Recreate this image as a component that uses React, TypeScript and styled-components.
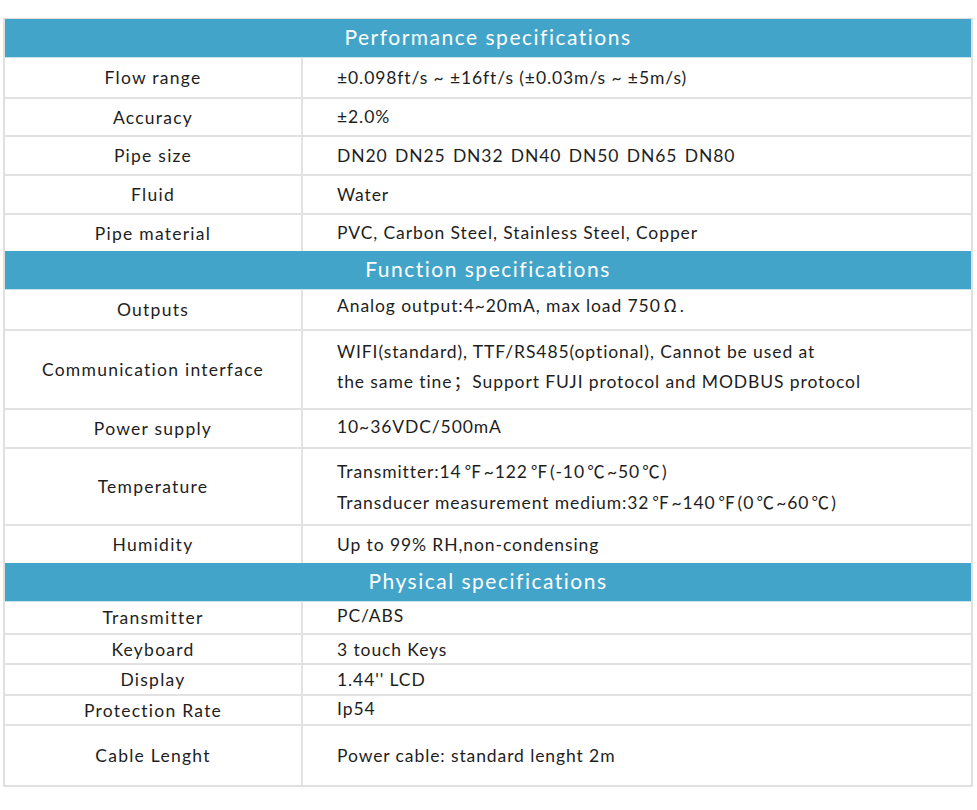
import React from "react";
import styled, { createGlobalStyle } from "styled-components";

const Global = createGlobalStyle`
  html, body { margin: 0; padding: 0; background: #ffffff; }
  body { font-family: Lato, "Open Sans", "Noto Sans CJK SC", sans-serif; color: #222; }
`;

const Page = styled.div`
  padding: 18px 0 0 3px;
  width: 977px;
  box-sizing: border-box;
`;

const Table = styled.div`
  width: 970px;
  border-top: 1px solid #dcdcdc;
  border-left: 2px solid #e0e0e0;
  border-right: 2px solid #e0e0e0;
  border-bottom: 2px solid #e0e0e0;
  box-sizing: border-box;
`;

const SectionHeader = styled.div`
  height: 39px;
  box-sizing: border-box;
  padding-bottom: 4px;
  background: #42a4c9;
  color: #ffffff;
  display: flex;
  align-items: center;
  justify-content: center;
  font-size: 21px;
  letter-spacing: 1.5px;
  border-bottom: 1px solid #cfe3ec;
`;

const Row = styled.div<{ $h: number; $first?: boolean }>`
  display: grid;
  grid-template-columns: 298px 1fr;
  height: ${(p) => p.$h}px;
  border-top: ${(p) => (p.$first ? "none" : "2px solid #e2e2e2")};
  box-sizing: border-box;
`;

const Label = styled.div`
  display: flex;
  align-items: center;
  justify-content: center;
  border-right: 2px solid #e2e2e2;
  font-size: 17.5px;
  letter-spacing: 1.25px;
  color: #1e1e1e;
`;

const Value = styled.div<{ $shift?: number }>`
  display: flex;
  flex-direction: column;
  justify-content: center;
  padding-left: 34px;
  font-size: 17.5px;
  letter-spacing: 0.9px;
  line-height: 29.5px;
  white-space: pre;
  color: #1e1e1e;
  transform: translateY(${(p) => p.$shift ?? 0}px);
`;

const Spaced = styled.span`
  word-spacing: 2px;
`;

const Sym = styled.span<{ $w?: number }>`
  display: inline-block;
  width: ${(p) => p.$w ?? 22}px;
  text-align: center;
  font-family: "Noto Sans CJK SC", "DejaVu Serif", serif;
  font-size: 17.5px;
  letter-spacing: 0;
`;

type Item = { label: string; value: React.ReactNode; h: number; shift?: number };

const performance: Item[] = [
  { label: "Flow range", value: "±0.098ft/s ~ ±16ft/s (±0.03m/s ~ ±5m/s)", h: 39 },
  { label: "Accuracy", value: "±2.0%", h: 38 },
  { label: "Pipe size", value: <Spaced>DN20 DN25 DN32 DN40 DN50 DN65 DN80</Spaced>, h: 39 },
  { label: "Fluid", value: "Water", h: 39 },
  { label: "Pipe material", value: "PVC, Carbon Steel, Stainless Steel, Copper", h: 38 },
];

const func: Item[] = [
  {
    label: "Outputs",
    value: (
      <span>
        Analog output:4~20mA, max load 750<Sym $w={19}>Ω</Sym>.
      </span>
    ),
    h: 39,
    shift: -4,
  },
  {
    label: "Communication interface",
    value: (
      <>
        <span>WIFI(standard), TTF/RS485(optional), Cannot be used at</span>
        <span>
          the same tine<Sym $w={20}>；</Sym>Support FUJI protocol and MODBUS protocol
        </span>
      </>
    ),
    h: 79,
    shift: -3,
  },
  { label: "Power supply", value: "10~36VDC/500mA", h: 39, shift: -2 },
  {
    label: "Temperature",
    value: (
      <>
        <span>
          Transmitter:14<Sym>℉</Sym>~122<Sym>℉</Sym>(-10<Sym>℃</Sym>~50<Sym>℃</Sym>)
        </span>
        <span>
          Transducer measurement medium:32<Sym>℉</Sym>~140<Sym>℉</Sym>(0<Sym>℃</Sym>~60<Sym>℃</Sym>)
        </span>
      </>
    ),
    h: 77,
  },
  { label: "Humidity", value: "Up to 99% RH,non-condensing", h: 39 },
];

const physical: Item[] = [
  { label: "Transmitter", value: "PC/ABS", h: 31, shift: -2 },
  { label: "Keyboard", value: "3 touch Keys", h: 30 },
  { label: "Display", value: "1.44'' LCD", h: 31 },
  { label: "Protection Rate", value: "Ip54", h: 30, shift: -2 },
  { label: "Cable Lenght", value: "Power cable: standard lenght 2m", h: 61 },
];

const Section: React.FC<{ title: string; items: Item[] }> = ({ title, items }) => (
  <>
    <SectionHeader>{title}</SectionHeader>
    {items.map((it, i) => (
      <Row key={it.label} $h={it.h} $first={i === 0}>
        <Label>{it.label}</Label>
        <Value $shift={it.shift}>{it.value}</Value>
      </Row>
    ))}
  </>
);

export default function App() {
  return (
    <>
      <Global />
      <Page>
        <Table>
          <Section title="Performance specifications" items={performance} />
          <Section title="Function specifications" items={func} />
          <Section title="Physical specifications" items={physical} />
        </Table>
      </Page>
    </>
  );
}
